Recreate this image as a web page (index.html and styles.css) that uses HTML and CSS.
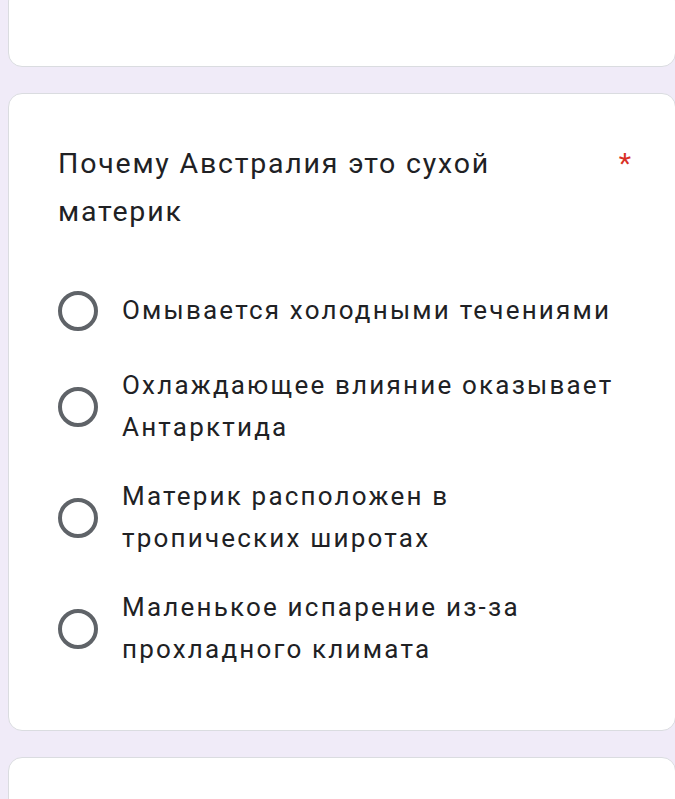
FILE: index.html
```html
<!DOCTYPE html>
<html lang="ru">
<head>
<meta charset="UTF-8" />
<meta name="viewport" content="width=device-width, initial-scale=1" />
<title>Вопрос</title>
<link rel="stylesheet" href="styles.css">
</head>
<body>
  <div class="form">
    <div class="card card-top"></div>

    <div class="card question" role="radiogroup" aria-labelledby="q-title">
      <div class="question-head">
        <div class="question-title" id="q-title">Почему Австралия это сухой материк</div>
        <span class="required" aria-label="Обязательный вопрос">*</span>
      </div>

      <div class="options">
        <label class="option">
          <span class="radio" role="radio" aria-checked="false"></span>
          <span class="option-text">Омывается холодными течениями</span>
        </label>
        <label class="option">
          <span class="radio" role="radio" aria-checked="false"></span>
          <span class="option-text">Охлаждающее влияние оказывает Антарктида</span>
        </label>
        <label class="option">
          <span class="radio" role="radio" aria-checked="false"></span>
          <span class="option-text">Материк расположен в тропических широтах</span>
        </label>
        <label class="option">
          <span class="radio" role="radio" aria-checked="false"></span>
          <span class="option-text">Маленькое испарение из-за прохладного климата</span>
        </label>
      </div>
    </div>

    <div class="card card-next"></div>
  </div>
</body>
</html>
```

FILE: styles.css
```css
/* Reset */
* {
  box-sizing: border-box;
}
body {
  margin: 0;
  background: #f0ebf8;
  font-family: Roboto, 'Noto Sans', Arial, sans-serif;
  color: #202124;
  overflow: hidden;
}
.form {
  display: flex;
  flex-direction: column;
  gap: 26px;
}
.card {
  background: #fff;
  border: 1px solid #dadce0;
  border-radius: 14px;
  margin: 0 -1px 0 8px;
}
.card-top {
  height: 80px;
  margin-top: -13px;
}
.card-next {
  height: 80px;
}
.question {
  padding: 46px 44px 60px 49px;
}
.question-head {
  display: flex;
  align-items: flex-start;
  gap: 16px;
}
.question-title {
  flex: 1;
  font-size: 28.5px;
  line-height: 48px;
  letter-spacing: 1.8px;
  padding-right: 40px;
}
.required {
  color: #d93025;
  font-size: 28.5px;
  line-height: 48px;
}
.options {
  display: flex;
  flex-direction: column;
  gap: 28px;
  margin-top: 49px;
  padding-right: 7px;
}
.option {
  display: flex;
  align-items: center;
  min-height: 52px;
  cursor: pointer;
}
.radio {
  flex: none;
  width: 40px;
  height: 40px;
  border: 4px solid #5f6368;
  border-radius: 50%;
}
.option-text {
  margin-left: 24px;
  font-size: 26px;
  line-height: 41.5px;
  letter-spacing: 2.2px;
}
```
